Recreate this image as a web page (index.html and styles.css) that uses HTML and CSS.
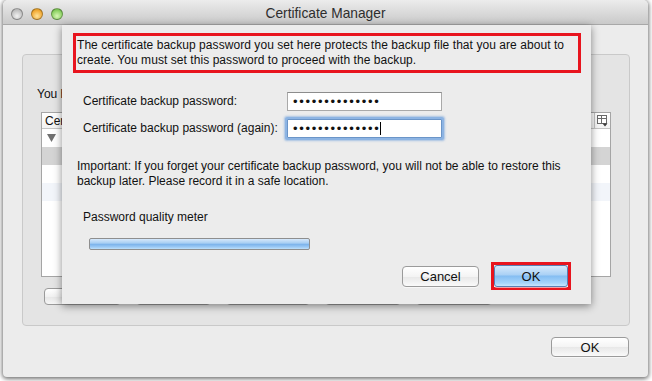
FILE: index.html
```html
<!DOCTYPE html>
<html>
<head>
<meta charset="utf-8">
<title>Certificate Manager</title>
<link rel="stylesheet" href="styles.css">
</head>
<body>
<div class="window">
  <div class="titlebar">
    <div class="lights">
      <span class="light close"></span>
      <span class="light min"></span>
      <span class="light max"></span>
    </div>
    <div class="title">Certificate Manager</div>
    <div class="spacer"></div>
  </div>
  <div class="content">
    <div class="panel">
      <div class="intro">You h</div>
      <div class="table">
        <div class="thead">
          <span class="th">Cer</span>
          <span class="colpick">
            <svg width="13" height="13" viewBox="0 0 13 13">
              <rect x="1.5" y="1.5" width="9" height="8" fill="#fff" stroke="#6a6a6a"/>
              <line x1="1.5" y1="4.5" x2="10.5" y2="4.5" stroke="#6a6a6a"/>
              <line x1="5.5" y1="1.5" x2="5.5" y2="9.5" stroke="#6a6a6a"/>
              <polygon points="6.5,9.5 11.5,9.5 9,12.5" fill="#3c3c3c"/>
            </svg>
          </span>
        </div>
        <div class="row">
          <svg class="disclosure" width="9" height="8" viewBox="0 0 9 8"><polygon points="0,0 9,0 4.5,8" fill="#707070"/></svg>
        </div>
        <div class="row sel"></div>
        <div class="row"></div>
        <div class="row alt"></div>
      </div>
      <div class="panel-buttons">
        <span class="pbtn w77"></span>
        <span class="pbtn w75"></span>
        <span class="pbtn w84"></span>
        <span class="pbtn w76"></span>
        <span class="pbtn w76"></span>
      </div>
    </div>
    <div class="footer">
      <span class="btn ok-main">OK</span>
    </div>
  </div>

  <div class="sheet">
    <div class="notice">
      <p>The certificate backup password you set here protects the backup file that you are about to<br>create. You must set this password to proceed with the backup.</p>
    </div>
    <div class="form-row first">
      <label class="label">Certificate backup password:</label>
      <div class="field"><span class="dots">••••••••••••••</span></div>
    </div>
    <div class="form-row second">
      <label class="label">Certificate backup password (again):</label>
      <div class="field focused"><span class="dots">••••••••••••••</span><span class="caret"></span></div>
    </div>
    <p class="important">Important: If you forget your certificate backup password, you will not be able to restore this<br>backup later. Please record it in a safe location.</p>
    <div class="meter-label">Password quality meter</div>
    <div class="meter"></div>
    <div class="sheet-buttons">
      <span class="btn cancel">Cancel</span>
      <span class="highlight"><span class="btn default">OK</span></span>
    </div>
  </div>
</div>
</body>
</html>
```

FILE: styles.css
```css
* { box-sizing: border-box; }
html, body { margin: 0; padding: 0; }
body {
  width: 652px;
  height: 381px;
  overflow: hidden;
  background: #ffffff;
  font-family: "Liberation Sans", Arial, sans-serif;
  font-size: 12px;
  color: #111;
}
.window {
  position: relative;
  margin-left: 3px;
  width: 645px;
  height: 377px;
  background: #ececec;
  border-radius: 5px 5px 4px 4px;
  box-shadow: 0 1px 4px 1px rgba(0,0,0,0.55);
  overflow: hidden;
}
.titlebar {
  height: 25px;
  display: grid;
  grid-template-columns: 70px 1fr 70px;
  align-items: center;
  background: linear-gradient(#ececec, #d9d9d9 55%, #c9c9c9);
  border-bottom: 1px solid #a8a8a8;
}
.lights {
  display: flex;
  gap: 8px;
  padding-left: 8px;
  padding-top: 3px;
}
.light {
  width: 12px;
  height: 12px;
  border-radius: 50%;
  border: 1px solid rgba(0,0,0,0.3);
}
.light.close { background: radial-gradient(circle at 50% 70%, #f2f2f2, #c5c5c5 60%, #a8a8a8); }
.light.min { background: radial-gradient(circle at 50% 70%, #ffe39a, #f3ad3a 60%, #c88612); }
.light.max { background: radial-gradient(circle at 50% 70%, #d8f7b6, #8fd366 60%, #5aa33a); }
.title {
  text-align: center;
  font-size: 13.75px;
  color: #2e2e2e;
  padding-top: 3px;
}
.content {
  padding: 29px 18px 0 19px;
}
.panel {
  height: 272px;
  background: #e4e4e4;
  border: 1px solid #c9c9c9;
  border-radius: 4px;
  padding: 0 18px 20px 18px;
  display: flex;
  flex-direction: column;
}
.intro {
  margin-top: 32px;
  margin-left: -4px;
  line-height: 15px;
  white-space: nowrap;
}
.table {
  margin-top: 10px;
  height: 166px;
  background: #fff;
  border: 1px solid #a5a5a5;
}
.thead {
  height: 16px;
  display: flex;
  align-items: center;
  border-bottom: 1px solid #c4c4c4;
  background: linear-gradient(#fff, #f3f3f3);
}
.th {
  flex: 1;
  padding-left: 3px;
  font-size: 12px;
  white-space: nowrap;
}
.colpick {
  width: 16px;
  height: 15px;
  border-left: 1px solid #c4c4c4;
  display: flex;
  align-items: center;
  justify-content: center;
}
.row {
  height: 18px;
  display: flex;
  align-items: center;
  padding-left: 5px;
}
.row.sel { background: #d4d4d4; }
.row.alt { background: #f2f5fa; }
.panel-buttons {
  margin-top: 11px;
  margin-left: 3px;
  display: flex;
  gap: 15px;
}
.pbtn {
  height: 17px;
  border: 1px solid #9a9a9a;
  border-radius: 4px;
  background: linear-gradient(#ffffff, #f1f1f1 50%, #e6e6e6 51%, #f6f6f6);
}
.w77 { width: 77px; }
.w75 { width: 75px; }
.w84 { width: 84px; }
.w76 { width: 76px; }
.footer {
  display: flex;
  justify-content: flex-end;
  padding-right: 1px;
  margin-top: 11px;
}
.btn {
  display: flex;
  align-items: center;
  justify-content: center;
  font-size: 13px;
  color: #111;
  border: 1px solid #9b9b9b;
  border-radius: 4px;
  background: linear-gradient(#ffffff, #f4f4f4 50%, #e8e8e8 52%, #fafafa);
  box-shadow: 0 1px 0 rgba(255,255,255,0.6);
}
.ok-main {
  width: 78px;
  height: 20px;
}

/* Sheet */
.sheet {
  position: absolute;
  left: 59px;
  top: 25px;
  width: 529px;
  height: 279px;
  background: #ececec;
  box-shadow: 0 2px 8px rgba(0,0,0,0.45);
  padding-left: 11px;
  display: flex;
  flex-direction: column;
}
.notice {
  margin-top: 8px;
  width: 508px;
  height: 40px;
  border: 3px solid #e8141e;
  padding-left: 1px;
  display: flex;
  align-items: center;
}
.notice p {
  margin: 0;
  line-height: 15px;
  white-space: nowrap;
  letter-spacing: 0.06px;
}
.form-row {
  display: flex;
  align-items: center;
  padding-left: 10px;
}
.form-row.first { margin-top: 19px; }
.form-row.second { margin-top: 8px; }
.label {
  width: 204px;
  line-height: 15px;
}
.field {
  width: 155px;
  height: 19px;
  background: #fff;
  border: 1px solid #a9a9a9;
  border-top-color: #8c8c8c;
  display: flex;
  align-items: center;
  padding-left: 5px;
}
.field.focused {
  border-color: #6b95c8;
  box-shadow: 0 0 0 2px #8db4e3, 0 0 2px 3px rgba(120,165,220,0.6);
  border-radius: 1px;
}
.dots {
  font-size: 13px;
  letter-spacing: 1.7px;
  line-height: 15px;
}
.caret {
  display: inline-block;
  width: 1px;
  height: 13px;
  background: #000;
  margin-left: -1px;
}
.important {
  margin: 21px 0 0 4px;
  line-height: 15px;
  white-space: nowrap;
}
.meter-label {
  margin-top: 21px;
  margin-left: 10px;
  line-height: 15px;
}
.meter {
  margin-top: 13px;
  margin-left: 16px;
  width: 221px;
  height: 12px;
  border: 1px solid #8e8e8e;
  border-radius: 2px;
  background: linear-gradient(#d6e8fb, #a9cff3 40%, #7fb5ec 55%, #9bc9f5 80%, #bfe0fb);
}
.sheet-buttons {
  margin-top: 12px;
  padding-right: 20px;
  display: flex;
  justify-content: flex-end;
  align-items: center;
  gap: 12px;
}
.cancel {
  width: 77px;
  height: 21px;
}
.highlight {
  display: flex;
  width: 80px;
  height: 28px;
  border: 3px solid #e8141e;
}
.btn.default {
  flex: 1;
  border-color: #5a7fb4;
  border-radius: 3px;
  background: linear-gradient(#d7e9fb, #a9d0f5 45%, #84bdf2 50%, #a6d4fb 85%, #c8e6fd);
}
```
